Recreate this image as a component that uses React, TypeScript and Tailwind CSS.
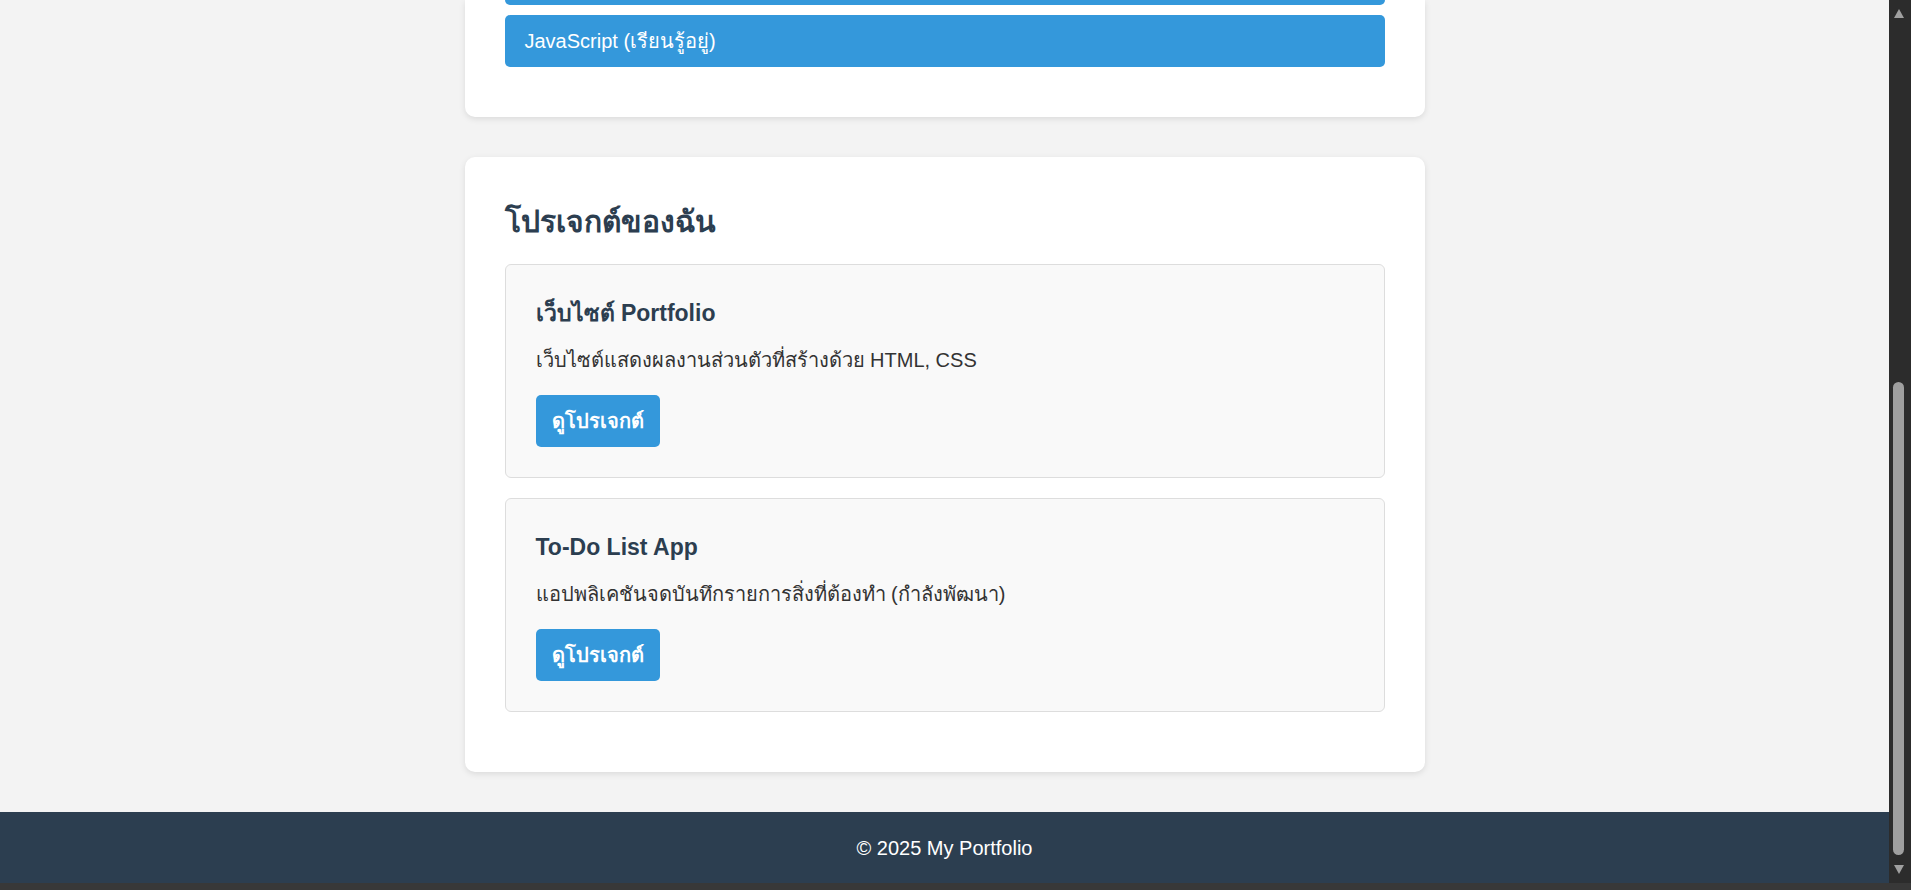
import React from 'react';

// Project list shown in the "โปรเจกต์ของฉัน" section
const projects = [
  {
    title: 'เว็บไซต์ Portfolio',
    description: 'เว็บไซต์แสดงผลงานส่วนตัวที่สร้างด้วย HTML, CSS',
  },
  {
    title: 'To-Do List App',
    description: 'แอปพลิเคชันจดบันทึกรายการสิ่งที่ต้องทำ (กำลังพัฒนา)',
  },
];

const ProjectCard = ({ title, description }: { title: string; description: string }) => (
  <div className="mb-[20px] rounded-[6px] border border-[#dddddd] bg-[#f9f9f9] p-[30px]">
    <h3 className="text-[23px] leading-[36px] font-bold text-[#2c3e50]">{title}</h3>
    <p className="mt-[15px] text-[20px] leading-[28px] text-[#333333]">{description}</p>
    <button className="mt-[21px] h-[52px] rounded-[5px] bg-[#3498db] px-[16px] text-[20px] font-bold text-white">
      ดูโปรเจกต์
    </button>
  </div>
);

const Scrollbar = () => (
  <div className="flex w-[22px] flex-col items-center bg-[#2c2c2c] pr-[3px]">
    <div className="mt-[9px] h-0 w-0 border-x-[5px] border-b-[9px] border-x-transparent border-b-[#a0a0a0]" />
    <div className="mt-[364px] h-[473px] w-[11px] rounded-[6px] bg-[#9f9f9f]" />
    <div className="mt-[10px] h-0 w-0 border-x-[5px] border-t-[9px] border-x-transparent border-t-[#a0a0a0]" />
  </div>
);

export default function App() {
  return (
    <div className="flex h-[890px] w-[1911px] flex-col overflow-hidden bg-[#383838] font-['Liberation_Sans','Noto_Sans',Arial,sans-serif]">
      <div className="flex h-[883px]">
        <div className="flex flex-1 flex-col bg-[#f3f3f3]">
          <main className="mx-auto w-[960px] flex-1">
            {/* Skills card, scrolled so only its bottom is visible */}
            <section className="mb-[40px] rounded-b-[10px] bg-white px-10 pb-[50px] shadow-[0_2px_6px_rgba(0,0,0,0.1)]">
              <div className="h-[5px] rounded-b-[5px] bg-[#3498db]" />
              <div className="mt-[10px] flex h-[52px] items-center rounded-[5px] bg-[#3498db] pl-5 text-[20px] text-white">
                JavaScript (เรียนรู้อยู่)
              </div>
            </section>

            <section className="rounded-[10px] bg-white px-10 pt-[45px] pb-[40px] shadow-[0_2px_6px_rgba(0,0,0,0.1)]">
              <h2 className="mb-[22px] text-[30px] leading-[40px] font-bold text-[#2c3e50]">โปรเจกต์ของฉัน</h2>
              {projects.map((p) => (
                <ProjectCard key={p.title} title={p.title} description={p.description} />
              ))}
            </section>
          </main>
          <footer className="flex h-[71px] items-center justify-center bg-[#2c3e50] text-[20px] text-white">
            © 2025 My Portfolio
          </footer>
        </div>
        <Scrollbar />
      </div>
    </div>
  );
}
